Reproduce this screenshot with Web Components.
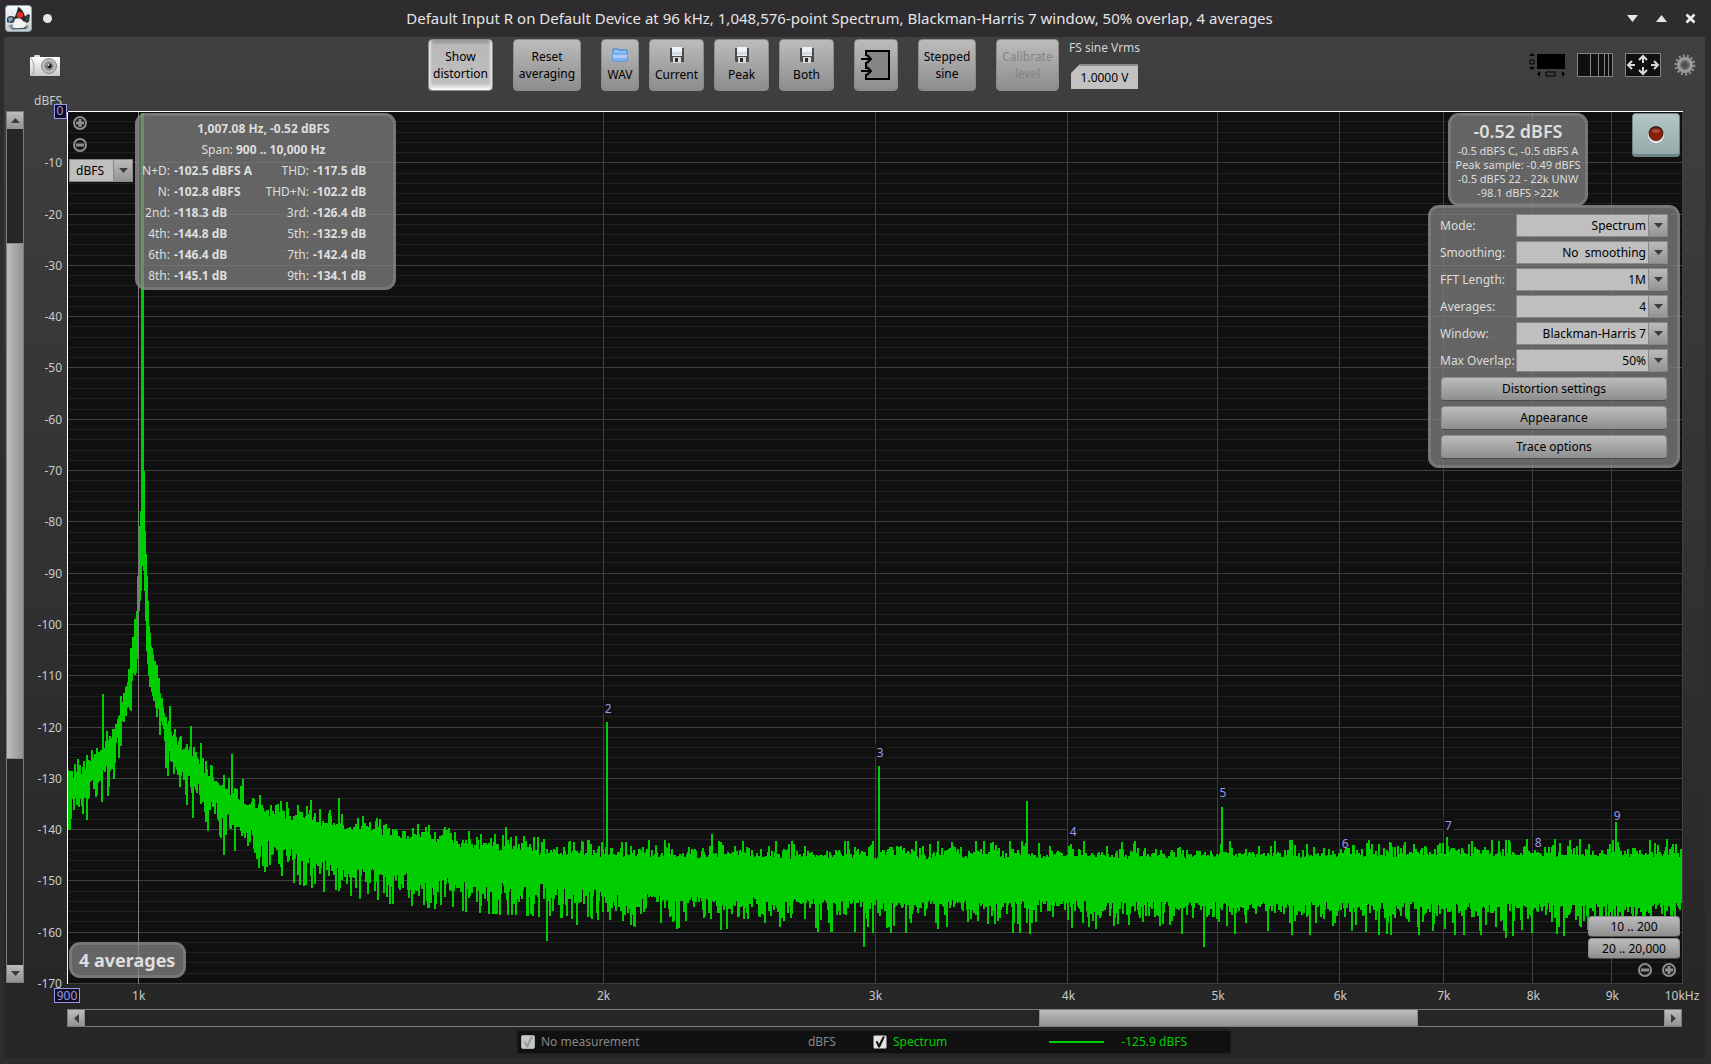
<!DOCTYPE html>
<html lang="en">
<head>
<meta charset="utf-8">
<title>Spectrum</title>
<style>
  html, body { height: 100%; margin: 0; }
  body {
    background: #2f2c2f;
    color: #d4d4d4;
    font: 12px/16px "Noto Sans", "Open Sans", sans-serif;
  }
</style>
</head>
<body>
<rta-app></rta-app>

<script>
function define(name, html, setup) {
  const template = document.createElement('template');
  template.innerHTML = html;

  customElements.define(name, class extends HTMLElement {
    constructor() {
      super();
      this.attachShadow({mode: 'open'});
      this.shadowRoot.appendChild(template.content.cloneNode(true));
    }

    connectedCallback() {
      if (setup && !this._ready) {
        this._ready = true;
        setup(this, this.shadowRoot);
      }
    }
  });
}

// ---- window title -------------------------------------------------------

define('title-bar', `
  <style>
    :host { display: flex; align-items: center; height: 37px; padding: 0 15px 0 5px; color: #e4e4e4; }
    h1 { flex: 1; margin: 0; text-align: center; font-size: 15px; line-height: 22px; padding-bottom: 2px; font-weight: 400; white-space: nowrap; overflow: hidden; }
    .dot { width: 9px; height: 9px; margin-left: 11px; border-radius: 50%; background: #e6e6e6; }
    .controls { display: flex; gap: 18px; }
    button { padding: 0; border: 0; background: none; width: 11px; height: 11px; }
    svg { display: block; }
  </style>
  <svg width="27" height="27" viewBox="0 0 27 27">
    <defs><linearGradient id="tile" x2="0" y2="1"><stop offset="0" stop-color="#fafcfd"/><stop offset="1" stop-color="#c3cdd4"/></linearGradient></defs>
    <rect x=".5" y=".5" width="26" height="26" rx="3" fill="url(#tile)" stroke="#8ea3b3"/>
    <path d="M2 13c2-3 5-2 8-1l1 5-5 1-4-1z" fill="#39434c"/>
    <path d="M3 13l4-1 1 3-4 2z" fill="#7fa6cf"/>
    <path d="M18 13l5-4 2 1-1 7-3 1-3-2z" fill="#3a3d40"/>
    <path d="M3 21c4-3 16-3 21 0l-2 3-15 1z" fill="#8a9399"/>
    <path d="M10 13c0 4-3 6-2 10 3 1 6 0 8 1 3 0 5-2 5-4 0-4-2-5-3-8z" fill="#f2f2f0"/>
    <path d="M13 2c4 1 7 7 8 14l-2 1c-2-3-5-5-9-3-1-2 2-6 3-12z" fill="#2a2a2a"/>
    <circle cx="15" cy="10" r="3" fill="#f02a20"/>
    <path d="M7 22c3 2 5 1 8 1 3 0 4 0 6-2l0 3H8z" fill="#4b4e50"/>
  </svg>
  <span class="dot"></span>
  <h1><slot></slot></h1>
  <div class="controls">
    <button aria-label="Minimise"><svg width="11" height="11"><path d="M0 2h11L5.500 9z" fill="#e6e6e6"/></svg></button>
    <button aria-label="Maximise"><svg width="11" height="11"><path d="M0 9h11L5.500 2z" fill="#e6e6e6"/></svg></button>
    <button aria-label="Close"><svg width="11" height="11"><path d="M1.500 1.500l8 8m0-8l-8 8" stroke="#f0f0f0" stroke-width="2.600"/></svg></button>
  </div>
`);

// ---- buttons --------------------------------------------------------------

define('tool-button', `
  <style>
    :host { display: block; }
    button {
      box-sizing: border-box; width: 100%; height: 52px; padding: 0;
      display: flex; flex-direction: column; align-items: center; justify-content: center;
      border: 1px solid #8b8b8b; border-radius: 4px;
      background: linear-gradient(#bcbcbc, #8c8c8c);
      font: inherit; line-height: 17px; color: #000; text-align: center; white-space: pre-line;
    }
    :host([pressed]) button {
      background: linear-gradient(#8f8f8f, #b9b9b9 5px, #bebebe 43px, #fff 50px);
      box-shadow: inset 3px 0 2px -1px #e2e2e2, inset -3px 0 2px -1px #e2e2e2;
    }
    :host([icon]) button { justify-content: flex-start; padding-top: 7px; line-height: 24px; }
    :host([disabled]) button { color: #858585; }
  </style>
  <button><slot name="icon"></slot><slot></slot></button>
`, (el, root) => {
  const button = root.querySelector('button');
  button.disabled = el.hasAttribute('disabled');
  if (el.hasAttribute('name')) button.setAttribute('aria-label', el.getAttribute('name'));
});

define('flat-button', `
  <style>
    :host { display: block; }
    button {
      box-sizing: border-box; display: block; width: 100%; height: var(--h, 24px); padding: 0;
      border: 1px solid #8e8e8e; border-bottom-color: #4c4c4c; border-radius: 4px;
      background: linear-gradient(#bcbcbc, #8e8e8e);
      font: inherit; color: #000;
    }
  </style>
  <button><slot></slot></button>
`);

define('zoom-button', `
  <style>
    :host { display: block; width: 14px; height: 14px; }
    button { display: block; padding: 0; border: 0; background: none; }
    svg { display: block; }
    path { stroke: #8e8e8e; stroke-width: 3; }
    :host([sign=minus]) .v { display: none; }
  </style>
  <button><svg width="14" height="14">
    <circle cx="7" cy="7" r="6" fill="#181818" stroke="#8e8e8e" stroke-width="2"/>
    <path d="M3 7h8"/><path class="v" d="M7 3v8"/>
  </svg></button>
`, (el, root) => {
  root.querySelector('button').setAttribute('aria-label', el.getAttribute('sign') === 'minus' ? 'Zoom out' : 'Zoom in');
});

// ---- drop-down with its label ----------------------------------------------

define('combo-box', `
  <style>
    :host { display: flex; align-items: center; color: #dcdcdc; }
    label { flex: 0 0 76px; white-space: nowrap; }
    :host([bare]) label { display: none; }
    .box { flex: 1; display: grid; grid-template-columns: 1fr 19px; box-sizing: border-box; height: 23px; border: 1px solid #888; background: #bfbfbf; }
    select {
      grid-area: 1 / 1 / 2 / 3; appearance: none; border: 0; margin: 0; padding: 0 21px 0 6px;
      background: none; font: inherit; color: #000; text-align-last: right; min-width: 0;
    }
    :host([bare]) select { text-align-last: left; }
    .arrow {
      grid-area: 1 / 2; pointer-events: none; display: flex; align-items: center; justify-content: center;
      border-left: 1px solid #888; background: linear-gradient(#bababa, #949494);
    }
  </style>
  <label for="s"></label>
  <div class="box">
    <select id="s"><option></option></select>
    <span class="arrow"><svg width="9" height="5"><path d="M0 0h9L4.500 5z" fill="#3c3c3c"/></svg></span>
  </div>
`, (el, root) => {
  root.querySelector('label').textContent = el.getAttribute('label');
  root.querySelector('option').textContent = el.getAttribute('value');
  if (el.hasAttribute('bare')) root.querySelector('select').setAttribute('aria-label', 'Unit');
});

// ---- scroll bar -------------------------------------------------------------

define('scroll-bar', `
  <style>
    :host { display: flex; box-sizing: border-box; border: 1px solid #7c7c7c; background: #262626; }
    :host([vertical]) { flex-direction: column; }
    button { flex: 0 0 17px; padding: 0; border: 0; background: linear-gradient(#bdbdbd, #929292); display: flex; align-items: center; justify-content: center; }
    .first { border-right: 1px solid #888; }
    .last { border-left: 1px solid #888; }
    .thumb { background: linear-gradient(#bdbdbd, #929292); border: solid #888; border-width: 0 1px; box-sizing: border-box; }
    :host([vertical]) .thumb { background: linear-gradient(90deg, #bdbdbd, #929292); border-width: 1px 0; }
    :host([vertical]) button { border-left: 0; border-right: 0; }
    svg { display: block; }
    :host(:not([vertical])) svg { transform: rotate(-90deg); }
  </style>
  <button class="first" aria-label="Back"><svg width="9" height="5"><path d="M0 5h9L4.500 0z" fill="#3c3c3c"/></svg></button>
  <div class="before"></div>
  <div class="thumb" role="scrollbar"></div>
  <div class="after"></div>
  <button class="last" aria-label="Forward"><svg width="9" height="5"><path d="M0 0h9L4.500 5z" fill="#3c3c3c"/></svg></button>
`, (el, root) => {
  const parts = el.getAttribute('parts').split(' ');
  ['.before', '.thumb', '.after'].forEach((sel, i) => {
    root.querySelector(sel).style.flex = parts[i] + ' 1 0px';
  });
});

// ---- translucent panel that floats on the graph -------------------------------

define('glass-panel', `
  <style>
    :host {
      display: block; box-sizing: border-box; border: 3px solid rgba(150, 150, 150, .4); border-radius: 11px;
      background: rgba(128, 128, 128, .75); background-clip: border-box; color: #dedede;
    }
  </style>
  <slot></slot>
`);

define('distortion-readout', `
  <style>
    :host { display: block; padding: 2px 0 1px; line-height: 21px; }
    p { margin: 0 4px 0 0; text-align: center; }
    table { width: 100%; border-spacing: 0; table-layout: fixed; }
    th, td { padding: 0; height: 21px; white-space: nowrap; }
    th { font-weight: 400; text-align: right; }
    td { font-weight: 700; padding-left: 4px; }
  </style>
  <p><b>1,007.08 Hz, -0.52 dBFS</b></p>
  <p>Span: <b>900 .. 10,000 Hz</b></p>
  <table>
    <colgroup><col style="width: 32px"><col style="width: 84px"><col style="width: 55px"><col></colgroup>
    <tbody></tbody>
  </table>
`, (el, root) => {
  const rows = [
    ['N+D:', '-102.5 dBFS A', 'THD:', '-117.5 dB'],
    ['N:', '-102.8 dBFS', 'THD+N:', '-102.2 dB'],
    ['2nd:', '-118.3 dB', '3rd:', '-126.4 dB'],
    ['4th:', '-144.8 dB', '5th:', '-132.9 dB'],
    ['6th:', '-146.4 dB', '7th:', '-142.4 dB'],
    ['8th:', '-145.1 dB', '9th:', '-134.1 dB']
  ];
  root.querySelector('tbody').innerHTML = rows.map(r =>
    `<tr><th>${r[0]}</th><td>${r[1]}</td><th>${r[2]}</th><td>${r[3]}</td></tr>`).join('');
});

define('level-readout', `
  <style>
    :host { display: block; padding: 3px 0; text-align: center; font-size: 11px; line-height: 14px; white-space: nowrap; }
    strong { display: block; font-size: 18px; line-height: 25px; font-weight: 600; }
    div { height: 14px; }
  </style>
  <strong>-0.52 dBFS</strong>
  <div>-0.5 dBFS C, -0.5 dBFS A</div>
  <div>Peak sample: -0.49 dBFS</div>
  <div>-0.5 dBFS 22 - 22k UNW</div>
  <div>-98.1 dBFS &gt;22k</div>
`);

define('settings-form', `
  <style>
    :host { display: flex; flex-direction: column; gap: 5px; padding: 6px 9px; }
    .rows { display: flex; flex-direction: column; gap: 4px; }
    flat-button { margin: 0 1px; }
  </style>
  <div class="rows">
    <combo-box label="Mode:" value="Spectrum"></combo-box>
    <combo-box label="Smoothing:" value="No&nbsp; smoothing"></combo-box>
    <combo-box label="FFT Length:" value="1M"></combo-box>
    <combo-box label="Averages:" value="4"></combo-box>
    <combo-box label="Window:" value="Blackman-Harris 7"></combo-box>
    <combo-box label="Max Overlap:" value="50%"></combo-box>
  </div>
  <flat-button>Distortion settings</flat-button>
  <flat-button>Appearance</flat-button>
  <flat-button>Trace options</flat-button>
`);

// ---- graph ------------------------------------------------------------------

const MIN_HZ = 900;
const MAX_HZ = 10000;
const RANGE_DB = 170;
const W = 1615;
const H = 872;

const xPercent = hz => 100 * Math.log(hz / MIN_HZ) / Math.log(MAX_HZ / MIN_HZ);
const yPercent = db => -100 * db / RANGE_DB;

// x, top and bottom of the noise band
const BAND = [
  [0, 672, 702], [8, 662, 700], [18, 656, 694], [28, 642, 680], [36, 636, 672], [43, 627, 665],
  [51, 606, 638], [58, 584, 615], [63, 556, 588], [68, 520, 560], [70, 500, 548], [72, 430, 500],
  [74, 400, 480], [75, 2, 455], [76, 2, 455], [77, 360, 460], [78, 420, 480], [80, 465, 540],
  [82, 515, 565], [84, 532, 572], [88, 556, 592], [94, 584, 612], [100, 608, 645], [108, 630, 664],
  [120, 638, 676], [133, 656, 688], [148, 670, 704], [158, 676, 714], [168, 684, 720], [183, 692, 734],
  [203, 700, 746], [233, 706, 756], [273, 713, 768], [313, 720, 774], [363, 726, 780], [433, 736, 786],
  [533, 742, 792], [633, 744, 796], [833, 744, 799], [1083, 744, 800], [1273, 743, 801], [1615, 742, 802]
];

const SPIKES = [
  [36, 583], [103, 595], [124, 615], [134, 632], [165, 643], [176, 668], [244, 689], [272, 687],
  [540, 611], [812, 655], [960, 690], [1155, 696], [1380, 726], [1549, 711], [645, 723], [439, 716]
];

const DIPS = [
  [1, 717], [30, 684], [42, 676], [47, 668], [126, 707], [141, 720], [157, 744], [168, 740],
  [272, 780], [357, 794], [480, 830], [510, 814], [612, 817], [797, 836], [820, 817], [1137, 836],
  [1320, 823], [1439, 827], [1490, 823], [871, 818]
];

function bandAt(x) {
  let i = 1;
  while (BAND[i][0] < x) i++;
  const a = BAND[i - 1], b = BAND[i];
  const t = (x - a[0]) / (b[0] - a[0]);
  return [a[1] + t * (b[1] - a[1]), a[2] + t * (b[2] - a[2])];
}

function tracePath() {
  let seed = 96;
  const random = () => (seed = (seed * 16807) % 2147483647) / 2147483647;
  const tops = new Map(SPIKES), dips = new Map(DIPS);
  let d = '';
  for (let x = 1; x < W; x++) {
    let [top, bottom] = bandAt(x);
    if (x < 70 || x > 82) {
      // the few lines per pixel left of 2 kHz make that part more ragged
      const rough = x < 540 ? 1.5 : 1;
      top += 4 * rough - Math.min(18, -5 * rough * Math.log(random()));
      bottom += -11 * rough + Math.min(34, -9 * rough * Math.log(random()));
    }
    if (tops.has(x)) top = tops.get(x);
    if (dips.has(x)) bottom = dips.get(x);
    d += `M${x} ${Math.round(top)}V${Math.round(bottom)}`;
  }
  return d;
}

define('spectrum-plot', `
  <style>
    :host { display: block; position: relative; }
    svg { display: block; overflow: visible; }
    line { shape-rendering: crispEdges; stroke: #404040; transform: translate(.5px, .5px); }
    .minor { stroke: #202020; }
    .bright { stroke: #7c7c7c; }
    .edge { stroke: #fff; }
    text { fill: #cacaca; font-size: 12px; }
    .mark { fill: #9898ee; text-anchor: middle; }
    .patch { fill: #101010; }
    .limit { fill: #101020; stroke: #9898f4; stroke-width: 1; shape-rendering: crispEdges; }
    .over { position: absolute; }
    .zoom { left: 6px; top: 5px; display: flex; flex-direction: column; gap: 8px; }
    .unit { left: 2px; top: 48px; width: 64px; }
    .distortion { left: 68px; top: 2px; width: 261px; }
    .count { left: 2px; bottom: 5px; padding: 3px 8px 3px 7px; font-size: 18px; line-height: 24px; font-weight: 700; }
    .level { right: 94px; top: 2px; width: 140px; }
    .settings { right: 2px; top: 94px; width: 252px; }
    .record { right: 2px; top: 2px; }
    .record button {
      display: flex; align-items: center; justify-content: center; width: 48px; height: 44px; padding: 0;
      border: 1px solid #6f8585; border-width: 1px 1px 3px; border-radius: 4px; background: linear-gradient(#b4c6c6, #98a9a9);
    }
    .spans { right: 2px; bottom: 24px; width: 92px; display: flex; flex-direction: column; gap: 1px; --h: 21px; }
    .zoomx { right: 6px; bottom: 6px; display: flex; gap: 10px; }
  </style>
  <svg class="graph" width="100%" height="100%">
    <rect width="100%" height="100%" fill="#101010"/>
    <g class="grid"></g>
    <svg width="100%" height="100%" viewBox="0 0 ${W} ${H}" preserveAspectRatio="none">
      <path class="trace" fill="none" stroke="#00ce00" stroke-width="2"/>
    </svg>
    <g class="front"></g>
  </svg>
  <div class="over zoom"><zoom-button sign="plus"></zoom-button><zoom-button sign="minus"></zoom-button></div>
  <combo-box class="over unit" bare label="" value="dBFS"></combo-box>
  <glass-panel class="over distortion"><distortion-readout></distortion-readout></glass-panel>
  <glass-panel class="over count">4 averages</glass-panel>
  <glass-panel class="over level"><level-readout></level-readout></glass-panel>
  <glass-panel class="over settings"><settings-form></settings-form></glass-panel>
  <div class="over record">
    <button aria-label="Record"><svg width="18" height="18">
      <circle cx="9" cy="10" r="8" fill="#e8eeee"/>
      <circle cx="9" cy="8.500" r="7.500" fill="#3c2420"/>
      <circle cx="9" cy="9" r="6.500" fill="#8a1e04"/>
      <ellipse cx="9" cy="6" rx="4" ry="2" fill="#a04a38"/>
    </svg></button>
  </div>
  <div class="over spans"><flat-button>10 .. 200</flat-button><flat-button>20 .. 20,000</flat-button></div>
  <div class="over zoomx"><zoom-button sign="minus"></zoom-button><zoom-button sign="plus"></zoom-button></div>
`, (el, root) => {
  let grid = '', front = '';

  for (let db = -2; db >= -RANGE_DB; db -= 2) {
    const y = yPercent(db) + '%';
    const minor = db % 10 ? ' class="minor"' : '';
    grid += `<line x1="0" x2="100%" y1="${y}" y2="${y}"${minor}/>`;
  }
  for (let db = 0; db >= -RANGE_DB; db -= 10) {
    if (db) front += `<text x="-5" y="${yPercent(db)}%" dy="5" text-anchor="end">${db}</text>`;
  }

  for (let k = 1; k <= 10; k++) {
    const x = xPercent(k * 1000) + '%';
    if (k > 1) grid += `<line x1="${x}" x2="${x}" y1="0" y2="100%"/>`;
    front += `<text x="${x}" y="100%" dx="${k === 10 ? 0 : 1}" dy="17" text-anchor="middle">${k}k${k === 10 ? 'Hz' : ''}</text>`;
  }

  const one = xPercent(1000) + '%';
  front += `<line class="bright" x1="${one}" x2="${one}" y1="0" y2="100%"/>`;

  // harmonic numbers, with the level each one stands at
  [[2, -116.6], [3, -125.2], [4, -140.5], [5, -132.9], [6, -142.9], [7, -139.4], [8, -142.7], [9, -137.4]].forEach(([n, db]) => {
    const x = xPercent(n * 1007.08) + '%', y = yPercent(db) + '%';
    front += `<svg x="${x}" y="${y}" overflow="visible"><rect class="patch" x="-4" y="-9" width="10" height="13"/>` +
      `<text class="mark" x="1" y="4">${n}</text></svg>`;
  });

  front += `<line class="edge" x1="0" x2="100%" y1="0" y2="0"/><line class="edge" x1="0" x2="0" y1="0" y2="100%"/>`;
  front += `<text x="-33" y="-6">dBFS</text>`;
  front += `<rect class="limit" x="-13" y="-7" width="12" height="14"/><text class="mark" x="-7" y="4">0</text>`;
  front += `<svg y="100%" overflow="visible"><rect class="limit" x="-13" y="5" width="25" height="14"/><text class="mark" x="0" y="17">900</text></svg>`;

  root.querySelector('.grid').innerHTML = grid;
  root.querySelector('.front').innerHTML = front;
  root.querySelector('.trace').setAttribute('d', tracePath());
});

// ---- legend -------------------------------------------------------------------

define('trace-legend', `
  <style>
    :host { display: flex; align-items: center; box-sizing: border-box; width: 712px; height: 22px; padding: 0 43px 0 3px; background: #101010; box-shadow: 0 0 2px 1px #1c1c1c; color: #888; }
    label { display: flex; align-items: center; gap: 6px; }
    input { appearance: none; margin: 0; width: 14px; height: 14px; border: 1px solid #777; border-radius: 2px; background: #e4e4e4; box-sizing: border-box; }
    input:checked::before { content: ""; display: block; width: 12px; height: 12px; background: #111; clip-path: polygon(14% 45%, 30% 42%, 42% 66%, 74% 4%, 92% 4%, 50% 96%, 36% 96%); }
    input:disabled { background: #c4c8ca; border-color: #aaa; }
    input:disabled::before { background: #999; }
    .live { color: #00ce00; }
    .unit { margin-left: auto; margin-right: 37px; }
    .key { width: 55px; height: 2px; margin-left: 102px; background: #00ce00; }
    .value { margin-left: 17px; }
  </style>
  <label><input type="checkbox" checked disabled>No measurement</label>
  <span class="unit">dBFS</span>
  <label class="live"><input type="checkbox" checked>Spectrum</label>
  <span class="key"></span>
  <span class="live value">-125.9 dBFS</span>
`);

// ---- toolbar --------------------------------------------------------------------

const FLOPPY = `<svg slot="icon" width="14" height="16" viewBox="0 0 14 16">
  <path d="M0 1h14v14H1l-1-1z" fill="#494b4e"/><path d="M2 0h10v9H2z" fill="#eef2f5"/><path d="M2 5h10v3H2z" fill="#cfdde6"/>
  <path d="M3 10h8v6H3z" fill="#d9d9d9"/><path d="M5 11h3v4H5z" fill="#2b2b2b"/></svg>`;

define('tool-bar', `
  <style>
    :host { display: flex; justify-content: space-between; align-items: flex-start; padding: 2px 9px 0 26px; height: 72px; }
    .camera, .view { display: flex; margin-top: 14px; }
    .camera { padding-top: 2px; }
    .view { align-items: center; gap: 12px; }
    .tools { display: flex; gap: 10px; padding-right: 21px; }
    .group { margin-right: 10px; }
    .icon { padding: 0; border: 0; background: none; display: block; }
    svg { display: block; }
    .vrms { display: flex; flex-direction: column; width: 71px; white-space: nowrap; }
    .vrms label { height: 24px; padding-top: 1px; }
    .vrms input {
      box-sizing: border-box; width: 67px; height: 25px; margin: 0 2px; padding: 0; border: 0; border-top: 2px solid #8c8c8c;
      background: #c2c2c2; font: inherit; color: #000; text-align: center; clip-path: polygon(9px 0, 100% 0, 100% 100%, 0 100%, 0 9px);
    }
  </style>
  <div class="camera"><button class="icon" aria-label="Capture image"><svg width="30" height="22">
    <defs><linearGradient id="c" x2="0" y2="1"><stop offset="0" stop-color="#fff"/><stop offset="1" stop-color="#c9c9c9"/></linearGradient></defs>
    <rect x="4" width="6" height="3" rx="1" fill="#ddd"/>
    <rect y="2" width="30" height="19" rx="1" fill="url(#c)"/>
    <path d="M1 3q5 8 2 17" fill="none" stroke="#a2a2a2"/>
    <circle cx="19" cy="11" r="7.500" fill="#bcbcbc" stroke="#888"/>
    <circle cx="19" cy="11" r="4.500" fill="#8a8a8a"/><circle cx="19.500" cy="11" r="2.200" fill="#15181f"/><circle cx="18.500" cy="10" r="1" fill="#dfe6f0"/>
  </svg></button></div>
  <div class="tools">
    <tool-button pressed class="group" style="width: 65px">Show
distortion</tool-button>
    <tool-button class="group" style="width: 68px">Reset
averaging</tool-button>
    <tool-button icon style="width: 38px"><svg slot="icon" width="16" height="16" viewBox="0 -1 16 16">
      <path d="M1 1h5l1 1h8v11H1z" fill="#8fc0f4" stroke="#2e7fd8"/><path d="M0 6h16l-1 7H1z" fill="#a9cdf6" stroke="#5b9be2"/><path d="M1 10h14v3H1z" fill="#7fb0ea"/>
    </svg>WAV</tool-button>
    <tool-button icon style="width: 55px">${FLOPPY}Current</tool-button>
    <tool-button icon style="width: 55px">${FLOPPY}Peak</tool-button>
    <tool-button icon class="group" style="width: 55px">${FLOPPY}Both</tool-button>
    <tool-button class="group" name="Input" style="width: 44px"><svg slot="icon" width="30" height="30">
      <path d="M5 6V1h23v28H5v-5" fill="#858585" stroke="#000" stroke-width="2"/><path d="M5 6v18" stroke="#000" stroke-width="2" stroke-dasharray="0 6 7 20"/>
      <path d="M0 9h10M6 5l4 4-4 4M0 21h10M6 17l4 4-4 4" fill="none" stroke="#000" stroke-width="2"/>
    </svg></tool-button>
    <tool-button class="group" style="width: 58px">Stepped
sine</tool-button>
    <tool-button disabled style="width: 63px">Calibrate
level</tool-button>
    <div class="vrms"><label for="v">FS sine Vrms</label><input id="v" value="1.0000 V"></div>
  </div>
  <div class="view">
    <button class="icon" aria-label="Scroll bars"><svg width="36" height="24">
      <path d="M8 1h28v15H8zM0 3l3-3 3 3zM0 14h6l-3 3zM11 18v6l-3-3zM33 18v6l3-3z"/>
      <path d="M1 7h4v4H1zM17 19h9v4h-9z" fill="none" stroke="#000"/>
    </svg></button>
    <button class="icon" aria-label="Grid spacing"><svg width="36" height="24">
      <path d="M.5.5h35v23H.5z" fill="#101010" stroke="#858585"/><path d="M13.500 0v24M21.500 0v24M27.500 0v24M31.500 0v24" stroke="#858585"/>
    </svg></button>
    <button class="icon" aria-label="Fit to window"><svg width="36" height="24">
      <path d="M.5.5h35v23H.5z" fill="#101010" stroke="#858585"/>
      <path d="M18 10V3m-4 4l4-4 4 4M18 14v7m-4-4l4 4 4-4M10 12H3m4-4l-4 4 4 4M26 12h7m-4-4l4 4-4 4" fill="none" stroke="#d8d8d8" stroke-width="2"/>
    </svg></button>
    <button class="icon" aria-label="Settings"><svg width="23" height="24">
      <circle cx="12" cy="12" r="9" fill="none" stroke="#8e8e8e" stroke-width="3" stroke-dasharray="2 2"/>
      <circle cx="12" cy="12" r="6" fill="none" stroke="#999" stroke-width="4"/>
      <circle cx="12" cy="12" r="4.500" fill="#5c5c5c" stroke="#777"/><circle cx="12" cy="12" r="2" fill="#4a4a4a"/>
    </svg></button>
  </div>
`);

define('rta-app', `
  <style>
    :host { display: flex; flex-direction: column; min-height: 100vh; box-sizing: border-box; padding: 0 6px 6px 4px; }
    title-bar { margin: 0 -6px 0 -4px; }
    main { flex: 1; display: flex; flex-direction: column; background: linear-gradient(#404040, #353535 40%, #262626 95%); }
    .graph { flex: 1; display: grid; grid-template-columns: 18px 1fr; grid-template-rows: 1fr 18px; gap: 26px 43px; padding: 0 23px 0 2px; }
    .across { grid-column: 2; }
    footer { display: flex; justify-content: center; padding: 4px 0 5px 39px; }
  </style>
  <title-bar>Default Input R on Default Device at 96 kHz, 1,048,576-point Spectrum, Blackman-Harris 7 window, 50% overlap, 4 averages</title-bar>
  <main>
    <tool-bar></tool-bar>
    <div class="graph">
      <scroll-bar vertical parts="114 516 207"></scroll-bar>
      <spectrum-plot></spectrum-plot>
      <scroll-bar class="across" parts="955 378 246"></scroll-bar>
    </div>
    <footer><trace-legend></trace-legend></footer>
  </main>
`);
</script>
</body>
</html>
